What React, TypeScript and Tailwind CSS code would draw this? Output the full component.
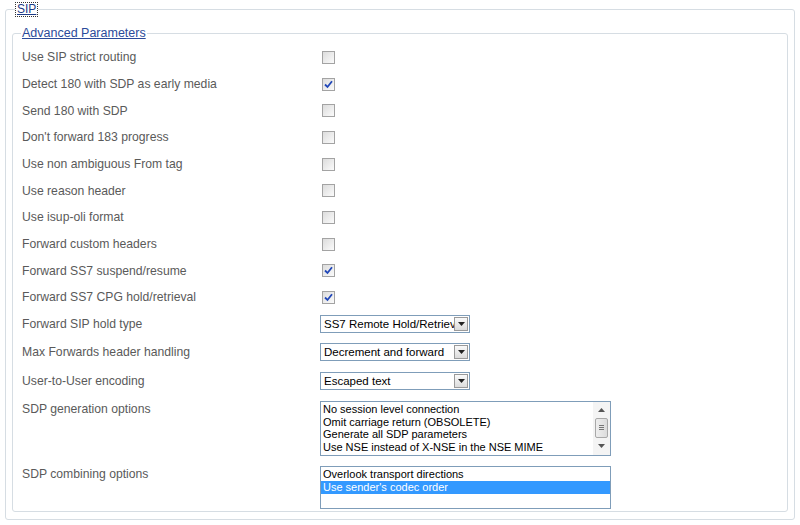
import React from "react";

const font = { fontFamily: '"Liberation Sans", Arial, sans-serif' };

function Checkbox({ checked }: { checked?: boolean }) {
  return (
    <div className="ml-[2px] flex h-[13px] w-[13px] items-center justify-center border border-[#a3a3a3] bg-gradient-to-br from-[#dcdcdc] to-[#fbfbfb]">
      {checked && (
        <svg width="9" height="9" viewBox="0 0 9 9">
          <path d="M1 4.5 L3.5 7 L8 1.2" fill="none" stroke="#2147b8" strokeWidth="1.8" />
        </svg>
      )}
    </div>
  );
}

function Select({ value }: { value: string }) {
  return (
    <div className="flex h-[18px] w-[150px] items-center border border-[#7f9db9] bg-white pl-[3px] pr-px">
      <span className="flex-1 overflow-hidden whitespace-nowrap text-[11.5px] leading-[14px] text-black">{value}</span>
      <div className="flex h-[14px] w-[14px] shrink-0 items-center justify-center border border-[#9a9a9a] bg-gradient-to-b from-[#fafafa] to-[#dcdcdc]">
        <svg width="7" height="4" viewBox="0 0 7 4">
          <path d="M0 0 L7 0 L3.5 4 Z" fill="#222" />
        </svg>
      </div>
    </div>
  );
}

const rows: { label: string; type: "cb" | "sel"; checked?: boolean; value?: string; h: string }[] = [
  { label: "Use SIP strict routing", type: "cb", h: "h-[26.7px]" },
  { label: "Detect 180 with SDP as early media", type: "cb", checked: true, h: "h-[26.7px]" },
  { label: "Send 180 with SDP", type: "cb", h: "h-[26.7px]" },
  { label: "Don't forward 183 progress", type: "cb", h: "h-[26.7px]" },
  { label: "Use non ambiguous From tag", type: "cb", h: "h-[26.7px]" },
  { label: "Use reason header", type: "cb", h: "h-[26.7px]" },
  { label: "Use isup-oli format", type: "cb", h: "h-[26.7px]" },
  { label: "Forward custom headers", type: "cb", h: "h-[26.7px]" },
  { label: "Forward SS7 suspend/resume", type: "cb", checked: true, h: "h-[26.7px]" },
  { label: "Forward SS7 CPG hold/retrieval", type: "cb", checked: true, h: "h-[26.7px]" },
  { label: "Forward SIP hold type", type: "sel", value: "SS7 Remote Hold/Retrieval", h: "h-[27px]" },
  { label: "Max Forwards header handling", type: "sel", value: "Decrement and forward", h: "h-[29px]" },
  { label: "User-to-User encoding", type: "sel", value: "Escaped text", h: "h-[29px]" },
];

export default function App() {
  return (
    <div className="h-[525px] w-[800px] bg-white" style={font}>
      <fieldset className="ml-[5px] mt-[2px] w-[790px] rounded-[3px] border border-[#d6dde3] px-[6px] pb-[7px]">
        <legend className="ml-[3px] px-0">
          <span className="block border border-dotted border-[#333] px-px text-[12px] leading-[13px] text-[#1c3a86] underline">
            SIP
          </span>
        </legend>
        <fieldset className="mt-[9px] rounded-[3px] border border-[#d6dde3] px-[9px] pb-[2px]">
          <legend className="px-px -ml-px text-[12.5px] leading-[14px] text-[#2b4b9b] underline">Advanced Parameters</legend>
          <div className="mt-[4px] flex flex-col">
            {rows.map((r) => (
              <div key={r.label} className={`flex items-center ${r.h}`}>
                <div className="w-[298px] text-[12.2px] text-[#5a5a5a]">{r.label}</div>
                {r.type === "cb" ? <Checkbox checked={r.checked} /> : <Select value={r.value!} />}
              </div>
            ))}
            <div className="mt-[5px] flex items-start">
              <div className="w-[298px] pt-px text-[12.2px] leading-[14px] text-[#5a5a5a]">SDP generation options</div>
              <div className="flex h-[55px] w-[291px] border border-[#7f9db9] bg-white">
                <div className="flex-1 pl-[2px] pt-[1px] text-[11px] leading-[12.8px] text-black">
                  <div>No session level connection</div>
                  <div>Omit carriage return (OBSOLETE)</div>
                  <div>Generate all SDP parameters</div>
                  <div>Use NSE instead of X-NSE in the NSE MIME</div>
                </div>
                <div className="flex w-[17px] flex-col items-center bg-[#f4f4f4]">
                  <div className="flex h-[16px] items-center justify-center">
                    <svg width="7" height="4" viewBox="0 0 7 4"><path d="M0 4 L7 4 L3.5 0 Z" fill="#555" /></svg>
                  </div>
                  <div className="flex h-[20px] w-[13px] flex-col items-center justify-center gap-px rounded-[2px] border border-[#a8a8a8] bg-gradient-to-r from-[#eee] to-[#dcdcdc]">
                    <div className="h-px w-[5px] bg-[#777]" />
                    <div className="h-px w-[5px] bg-[#777]" />
                    <div className="h-px w-[5px] bg-[#777]" />
                  </div>
                  <div className="flex flex-1 items-center justify-center">
                    <svg width="7" height="4" viewBox="0 0 7 4"><path d="M0 0 L7 0 L3.5 4 Z" fill="#555" /></svg>
                  </div>
                </div>
              </div>
            </div>
            <div className="mt-[10px] flex items-start">
              <div className="w-[298px] pt-px text-[12.2px] leading-[14px] text-[#5a5a5a]">SDP combining options</div>
              <div className="h-[43px] w-[291px] border border-[#7f9db9] bg-white pt-[1px] text-[11px] leading-[13px] text-black">
                <div className="pl-[2px]">Overlook transport directions</div>
                <div className="bg-[#3399ff] pl-[2px] text-white">Use sender's codec order</div>
              </div>
            </div>
          </div>
        </fieldset>
      </fieldset>
    </div>
  );
}
